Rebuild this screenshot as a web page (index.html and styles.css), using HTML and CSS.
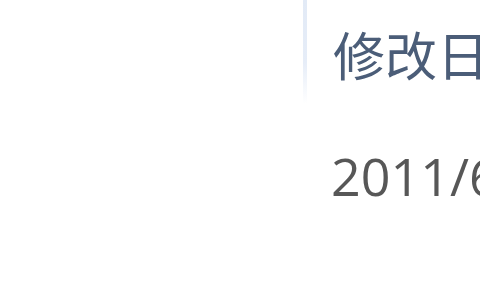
FILE: index.html
```html
<!DOCTYPE html>
<html lang="zh-CN">
<head>
  <meta charset="UTF-8">
  <title>修改日期</title>
<link rel="stylesheet" href="styles.css">
</head>
<body>
<div class="list">
	<div class="col col-name"></div>
	<div class="col col-date">
		<div class="header">
			<span class="sep"></span>
			<span class="title">修改日期</span>
		</div>
		<div class="row">2011/6/21 10:32</div>
	</div>
</div>
</body>
</html>
```
FILE: styles.css
```css
* {
	margin: 0;
	padding: 0;
	box-sizing: border-box;
}
html, body {
	height: 100%;
	background: #fff;
	overflow: hidden;
}

.list {
	display: flex;
	height: 300px;
}

.col-name {
	width: 303px;
	flex: none;
}

.col-date {
	flex: 1;
	min-width: 0;
	white-space: nowrap;
}

.header {
	display: flex;
	height: 104px;
}

.header .sep {
	width: 4px;
	flex: none;
	background: linear-gradient(to bottom, #e2eaf6 0%, #e6edf8 60%, #ffffff 100%);
}

.header .title {
	padding: 18px 0 0 26px;
	font: normal 52px "Noto Sans CJK SC", "Microsoft YaHei", sans-serif;
	line-height: 72px;
	color: #4b5d78;
}

.row {
	padding: 42px 0 0 28px;
	font: normal 52px "Open Sans", "Segoe UI", sans-serif;
	line-height: 60px;
	color: #575757;
}
```
